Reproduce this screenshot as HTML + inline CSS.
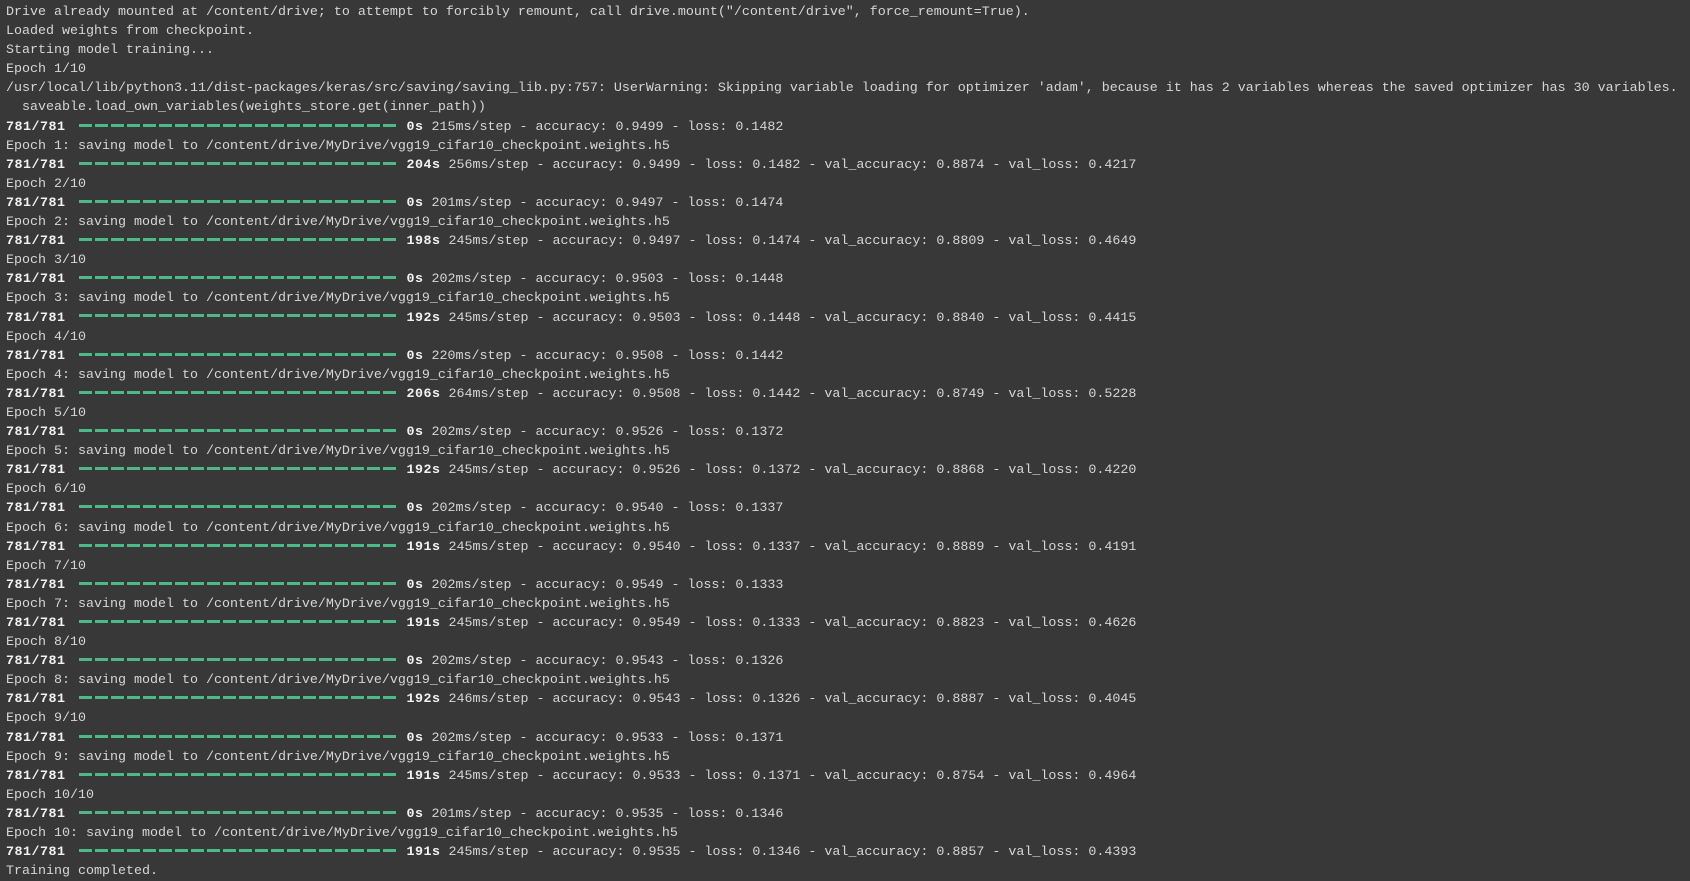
<!DOCTYPE html>
<html><head><meta charset="utf-8"><style>
html,body{margin:0;padding:0;background:#383838;width:1690px;height:878px;overflow:hidden}
.o{position:absolute;left:6px;top:3px;font-family:"Liberation Mono","NanumGothic",monospace;font-size:13.34px;line-height:19.1px;color:#d6d6d6}
.o div{height:19.1px;white-space:pre}
b{color:#f2f2f2;font-weight:bold;letter-spacing:0.5px}
.bar{display:inline-block;width:320px;height:3px;vertical-align:middle;margin:0 0 0 13px;position:relative;top:-1px;background:repeating-linear-gradient(90deg,#4fb889 0,#4fb889 13px,transparent 13px,transparent 16px)}
</style></head><body><div class="o"><div>Drive already mounted at /content/drive; to attempt to forcibly remount, call drive.mount("/content/drive", force_remount=True).</div><div>Loaded weights from checkpoint.</div><div>Starting model training...</div><div>Epoch 1/10</div><div>/usr/local/lib/python3.11/dist-packages/keras/src/saving/saving_lib.py:757: UserWarning: Skipping variable loading for optimizer 'adam', because it has 2 variables whereas the saved optimizer has 30 variables.</div><div>  saveable.load_own_variables(weights_store.get(inner_path))</div><div><b>781/781</b><span class="bar"></span> <b>0s</b> 215ms/step - accuracy: 0.9499 - loss: 0.1482</div><div>Epoch 1: saving model to /content/drive/MyDrive/vgg19_cifar10_checkpoint.weights.h5</div><div><b>781/781</b><span class="bar"></span> <b>204s</b> 256ms/step - accuracy: 0.9499 - loss: 0.1482 - val_accuracy: 0.8874 - val_loss: 0.4217</div><div>Epoch 2/10</div><div><b>781/781</b><span class="bar"></span> <b>0s</b> 201ms/step - accuracy: 0.9497 - loss: 0.1474</div><div>Epoch 2: saving model to /content/drive/MyDrive/vgg19_cifar10_checkpoint.weights.h5</div><div><b>781/781</b><span class="bar"></span> <b>198s</b> 245ms/step - accuracy: 0.9497 - loss: 0.1474 - val_accuracy: 0.8809 - val_loss: 0.4649</div><div>Epoch 3/10</div><div><b>781/781</b><span class="bar"></span> <b>0s</b> 202ms/step - accuracy: 0.9503 - loss: 0.1448</div><div>Epoch 3: saving model to /content/drive/MyDrive/vgg19_cifar10_checkpoint.weights.h5</div><div><b>781/781</b><span class="bar"></span> <b>192s</b> 245ms/step - accuracy: 0.9503 - loss: 0.1448 - val_accuracy: 0.8840 - val_loss: 0.4415</div><div>Epoch 4/10</div><div><b>781/781</b><span class="bar"></span> <b>0s</b> 220ms/step - accuracy: 0.9508 - loss: 0.1442</div><div>Epoch 4: saving model to /content/drive/MyDrive/vgg19_cifar10_checkpoint.weights.h5</div><div><b>781/781</b><span class="bar"></span> <b>206s</b> 264ms/step - accuracy: 0.9508 - loss: 0.1442 - val_accuracy: 0.8749 - val_loss: 0.5228</div><div>Epoch 5/10</div><div><b>781/781</b><span class="bar"></span> <b>0s</b> 202ms/step - accuracy: 0.9526 - loss: 0.1372</div><div>Epoch 5: saving model to /content/drive/MyDrive/vgg19_cifar10_checkpoint.weights.h5</div><div><b>781/781</b><span class="bar"></span> <b>192s</b> 245ms/step - accuracy: 0.9526 - loss: 0.1372 - val_accuracy: 0.8868 - val_loss: 0.4220</div><div>Epoch 6/10</div><div><b>781/781</b><span class="bar"></span> <b>0s</b> 202ms/step - accuracy: 0.9540 - loss: 0.1337</div><div>Epoch 6: saving model to /content/drive/MyDrive/vgg19_cifar10_checkpoint.weights.h5</div><div><b>781/781</b><span class="bar"></span> <b>191s</b> 245ms/step - accuracy: 0.9540 - loss: 0.1337 - val_accuracy: 0.8889 - val_loss: 0.4191</div><div>Epoch 7/10</div><div><b>781/781</b><span class="bar"></span> <b>0s</b> 202ms/step - accuracy: 0.9549 - loss: 0.1333</div><div>Epoch 7: saving model to /content/drive/MyDrive/vgg19_cifar10_checkpoint.weights.h5</div><div><b>781/781</b><span class="bar"></span> <b>191s</b> 245ms/step - accuracy: 0.9549 - loss: 0.1333 - val_accuracy: 0.8823 - val_loss: 0.4626</div><div>Epoch 8/10</div><div><b>781/781</b><span class="bar"></span> <b>0s</b> 202ms/step - accuracy: 0.9543 - loss: 0.1326</div><div>Epoch 8: saving model to /content/drive/MyDrive/vgg19_cifar10_checkpoint.weights.h5</div><div><b>781/781</b><span class="bar"></span> <b>192s</b> 246ms/step - accuracy: 0.9543 - loss: 0.1326 - val_accuracy: 0.8887 - val_loss: 0.4045</div><div>Epoch 9/10</div><div><b>781/781</b><span class="bar"></span> <b>0s</b> 202ms/step - accuracy: 0.9533 - loss: 0.1371</div><div>Epoch 9: saving model to /content/drive/MyDrive/vgg19_cifar10_checkpoint.weights.h5</div><div><b>781/781</b><span class="bar"></span> <b>191s</b> 245ms/step - accuracy: 0.9533 - loss: 0.1371 - val_accuracy: 0.8754 - val_loss: 0.4964</div><div>Epoch 10/10</div><div><b>781/781</b><span class="bar"></span> <b>0s</b> 201ms/step - accuracy: 0.9535 - loss: 0.1346</div><div>Epoch 10: saving model to /content/drive/MyDrive/vgg19_cifar10_checkpoint.weights.h5</div><div><b>781/781</b><span class="bar"></span> <b>191s</b> 245ms/step - accuracy: 0.9535 - loss: 0.1346 - val_accuracy: 0.8857 - val_loss: 0.4393</div><div>Training completed.</div></div></body></html>
